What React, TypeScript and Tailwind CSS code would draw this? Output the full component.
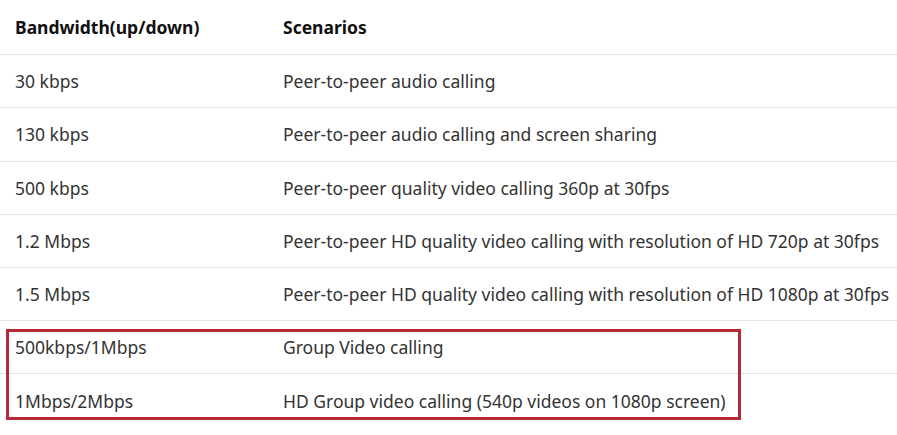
const rows: { bw: string; scenario: string; h: string }[] = [
  { bw: '30 kbps', scenario: 'Peer-to-peer audio calling', h: 'h-[53px]' },
  { bw: '130 kbps', scenario: 'Peer-to-peer audio calling and screen sharing', h: 'h-[54px]' },
  { bw: '500 kbps', scenario: 'Peer-to-peer quality video calling 360p at 30fps', h: 'h-[53px]' },
  {
    bw: '1.2 Mbps',
    scenario: 'Peer-to-peer HD quality video calling with resolution of HD 720p at 30fps',
    h: 'h-[53px]',
  },
  {
    bw: '1.5 Mbps',
    scenario: 'Peer-to-peer HD quality video calling with resolution of HD 1080p at 30fps',
    h: 'h-[53px]',
  },
  { bw: '500kbps/1Mbps', scenario: 'Group Video calling', h: 'h-[53px]' },
  { bw: '1Mbps/2Mbps', scenario: 'HD Group video calling (540p videos on 1080p screen)', h: 'h-[54px]' },
]

export default function App() {
  return (
    <div className="relative h-[435px] w-[897px] overflow-hidden bg-white font-['Noto_Sans',sans-serif] text-[17.5px] text-[#333]">
      <div className="flex h-[55px] items-center border-b border-[#e3e3e3] font-bold text-[#111]">
        <div className="w-[283px] pl-[15px]">Bandwidth(up/down)</div>
        <div className="flex-1">Scenarios</div>
      </div>
      {rows.map((row, i) => (
        <div
          key={row.bw}
          className={`flex items-center ${row.h} ${i === rows.length - 1 ? '' : 'border-b border-[#e3e3e3]'}`}
        >
          <div className="w-[283px] pl-[15px]">{row.bw}</div>
          <div className="flex-1 whitespace-nowrap">{row.scenario}</div>
        </div>
      ))}
      {/* highlight annotation */}
      <div className="pointer-events-none absolute left-[6px] top-[329px] h-[91px] w-[735px] border-[3px] border-[#b52a35]" />
    </div>
  )
}
